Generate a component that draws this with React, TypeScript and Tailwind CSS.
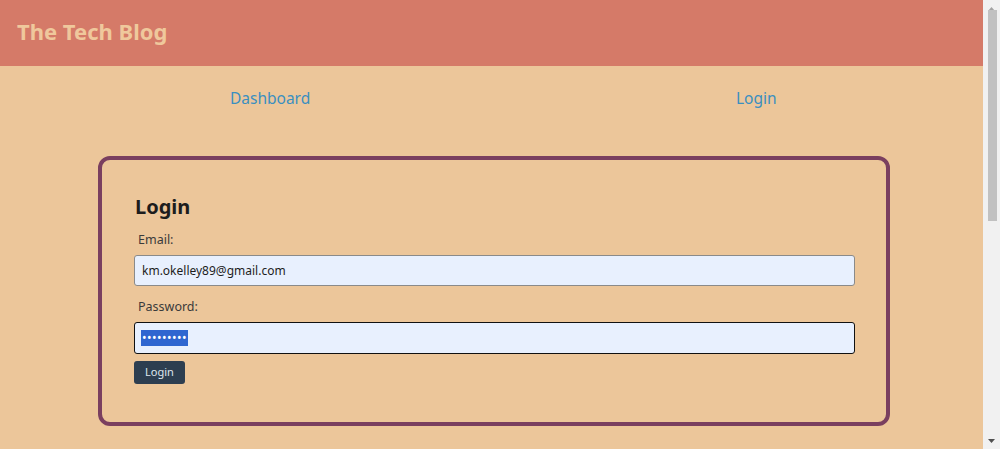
const Scrollbar = () => (
  <div className="w-[17px] h-full bg-[#f1f1f1] flex flex-col items-center shrink-0">
    <div className="h-[17px] w-full flex items-center justify-center">
      <svg width="7" height="4" viewBox="0 0 7 4">
        <path d="M0 4 L3.5 0 L7 4 Z" fill="#a3a3a3" />
      </svg>
    </div>
    <div className="w-[9px] h-[211px] bg-[#c1c1c1] -mt-[7px] ml-[1px]" />
    <div className="flex-1" />
    <div className="h-[17px] w-full flex items-center justify-center">
      <svg width="7" height="4" viewBox="0 0 7 4">
        <path d="M0 0 L7 0 L3.5 4 Z" fill="#505050" />
      </svg>
    </div>
  </div>
);

const App = () => {
  return (
    <div className="h-[449px] flex overflow-hidden bg-[#ecc69a] font-['Noto_Sans','Open_Sans',sans-serif]">
      <div className="flex-1">
        <header className="h-[66px] bg-[#d57a68] flex items-center px-[17px] pb-[4px]">
          <h1 className="text-[22px] font-bold text-[#efc89c]">The Tech Blog</h1>
        </header>

        <nav className="flex items-center h-[66px] pl-[230px] text-[15.5px] text-[#3a8fc0]">
          <a href="#" className="w-[506px]">
            Dashboard
          </a>
          <a href="#">Login</a>
        </nav>

        <div className="mt-[24px] ml-[98px] w-[792px] h-[270px] border-4 border-[#7a3f5f] rounded-xl px-[32px] pt-[32px]">
          <h2 className="pl-[1px] text-[20px] font-bold text-[#1d1d1d] leading-[30px]">Login</h2>
          <form className="flex flex-col">
            <label className="text-[12.5px] text-[#3a3a3a] pl-[4px] mt-[9px] h-[24px] leading-[18px]">Email:</label>
            <input
              type="text"
              defaultValue="km.okelley89@gmail.com"
              className="h-[31px] w-[721px] bg-[#e8f0fe] border border-[#8a8a8a] rounded-[3px] px-[7px] text-[12px] text-[#1d1d1d] outline-none"
            />
            <label className="text-[12.5px] text-[#3a3a3a] pl-[4px] mt-[11px] h-[25px] leading-[20px]">Password:</label>
            <div className="h-[32px] w-[721px] bg-[#e8f0fe] border border-[#111] rounded-[3px] px-[6px] flex items-center">
              <span className="bg-[#2f66d0] text-white text-[12px] leading-[16px] tracking-[0.5px] px-[1px]">
                •••••••••
              </span>
            </div>
            <button
              type="button"
              className="mt-[7px] w-[51px] h-[23px] bg-[#2d3e50] text-[#dfe6ee] text-[11px] rounded-[3px]"
            >
              Login
            </button>
          </form>
        </div>
      </div>
      <Scrollbar />
    </div>
  );
};

export default App;
